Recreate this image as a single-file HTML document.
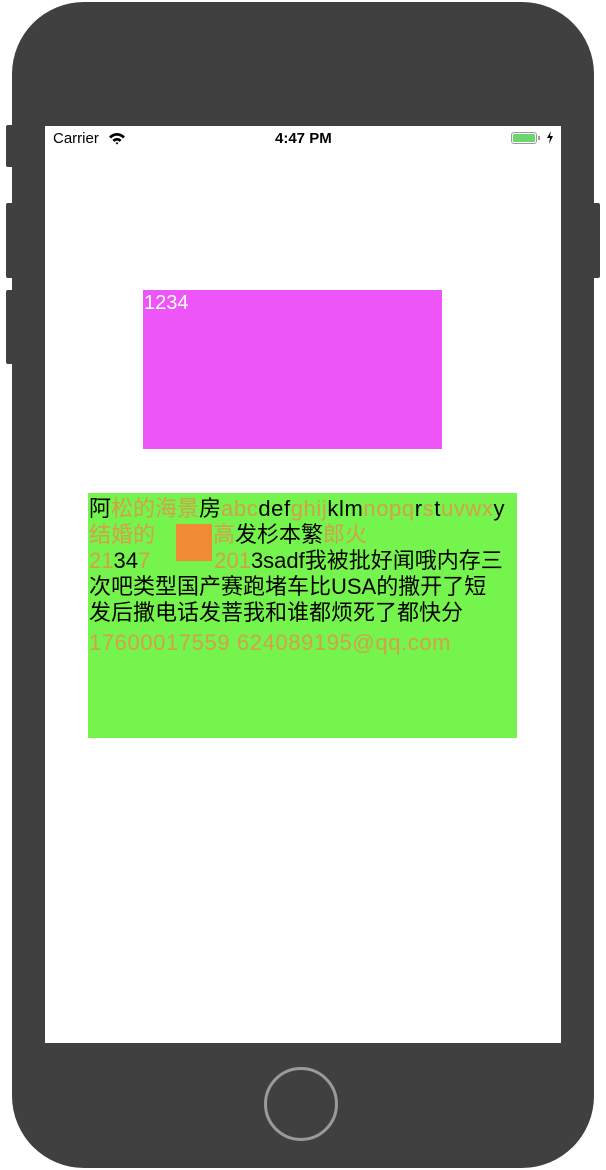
<!DOCTYPE html>
<html><head><meta charset="utf-8"><style>
body{margin:0;width:606px;height:1170px;background:#fff;position:relative;overflow:hidden;font-family:"Liberation Sans","Noto Sans CJK SC",sans-serif}
.phone{position:absolute;left:12px;top:2px;width:582px;height:1166px;background:#404040;border-radius:72px}
.btn{position:absolute;background:#404040;border-radius:2px}
.screen{position:absolute;left:45px;top:126px;width:516px;height:917px;background:#fff}
.home{position:absolute;left:264px;top:1067px;width:74px;height:74px;border:3px solid #9a9a9a;border-radius:50%;box-sizing:border-box}
.o{color:#d4a04a}
.g{position:absolute;left:88px;top:493px;width:429px;height:245px;background:#74f44c}
.t{position:absolute;left:89px;top:496px;font-size:22px;line-height:26px;color:#000;white-space:nowrap}
.t div{height:26px}
.l{letter-spacing:0.6px}
</style></head><body>
<div class="btn" style="left:6px;top:125px;width:8px;height:42px"></div>
<div class="btn" style="left:6px;top:203px;width:8px;height:75px"></div>
<div class="btn" style="left:6px;top:290px;width:8px;height:74px"></div>
<div class="btn" style="left:592px;top:203px;width:8px;height:75px"></div>
<div class="phone"></div>
<div class="screen"></div>
<div class="home"></div>
<div style="position:absolute;left:53px;top:130px;font-size:15px">Carrier</div>
<svg style="position:absolute;left:108px;top:132px" width="18" height="13" viewBox="0 0 18 13"><path d="M1 4.5A11 11 0 0 1 17 4.5L15 6.5A8 8 0 0 0 3 6.5Z M4.5 8A6 6 0 0 1 13.5 8L11.5 10A3 3 0 0 0 6.5 10Z M7.5 11A2 2 0 0 1 10.5 11L9 12.5Z" fill="#000"/></svg>
<div style="position:absolute;left:275px;top:130px;font-size:15px;font-weight:bold">4:47 PM</div>
<div style="position:absolute;left:511px;top:132px;width:26px;height:12px;border:1px solid #999;border-radius:3px;box-sizing:border-box;padding:1px"><div style="background:#6bd66b;height:100%;border-radius:1px"></div></div>
<div style="position:absolute;left:538px;top:136px;width:2px;height:4px;background:#999"></div>
<svg style="position:absolute;left:546px;top:131px" width="8" height="13" viewBox="0 0 8 13"><path d="M5 0L1 7H4L3 13L7 5H4Z" fill="#000"/></svg>
<div style="position:absolute;left:143px;top:290px;width:299px;height:159px;background:#ee55f8"></div>
<div style="position:absolute;left:144px;top:292px;font-size:20px;color:#fff">1234</div>
<div class="g"></div>
<div style="position:absolute;left:176px;top:524px;width:36px;height:37px;background:#f08a35"></div>
<div class="t">
<div>阿<span class="o">松的海景</span>房<span class="l"><span class="o">abc</span>def<span class="o">ghij</span>klm<span class="o">nopq</span>r<span class="o">s</span>t<span class="o">uvwx</span>y</span></div>
<div><span class="o">结婚的</span><span style="display:inline-block;width:58px"></span><span class="o">高</span>发杉本繁<span class="o">郎火</span></div>
<div><span class="o">21</span>34<span class="o">7</span><span style="display:inline-block;width:64px"></span><span class="o">201</span>3sadf我被批好闻哦内存三</div>
<div>次吧类型国产赛跑堵车比USA的撒开了短</div>
<div>发后撒电话发菩我和谁都烦死了都快分</div>
<div class="o l" style="margin-top:4px">17600017559 624089195@qq.com</div>
</div>
</body></html>
